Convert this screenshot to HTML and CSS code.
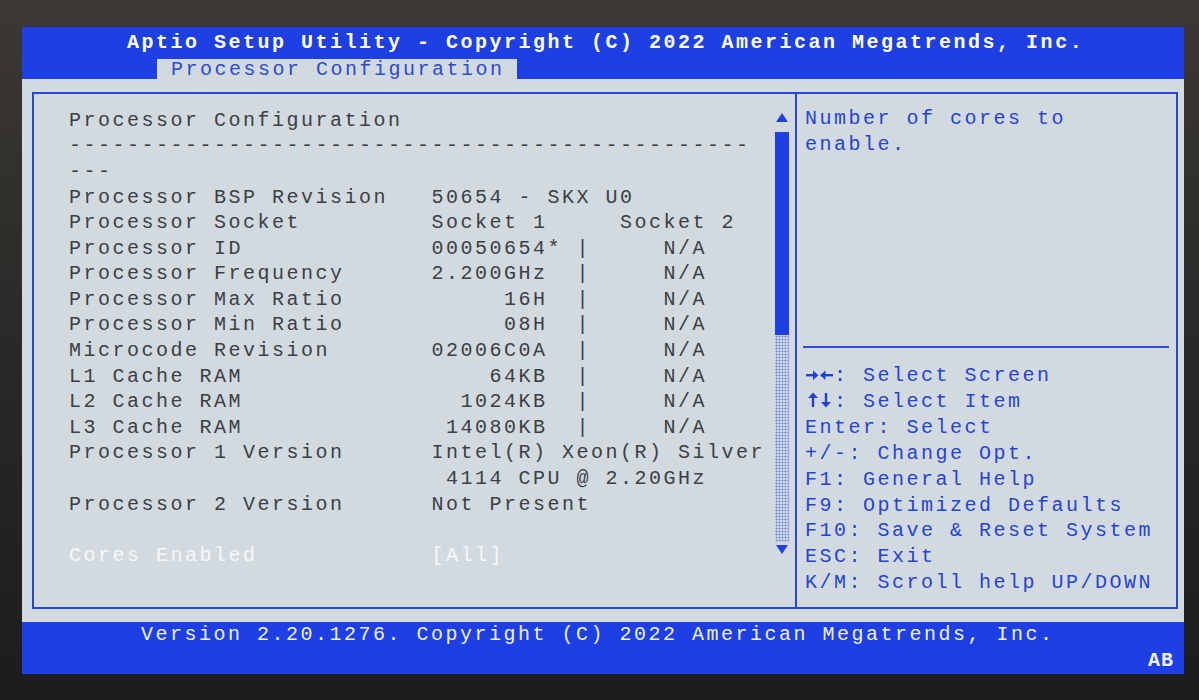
FILE: index.html
```html
<!DOCTYPE html>
<html lang="en">
<head>
    <meta charset="UTF-8">
    <title>Aptio Setup Utility</title>
    <link rel="stylesheet" href="styles.css">
</head>
<body>

    <div class="screen">

        <!-- Title bar with tab -->
        <header class="top-bar">
            <div class="title">Aptio Setup Utility - Copyright (C) 2022 American Megatrends, Inc.</div>
            <div class="tabs"><span class="tab">Processor Configuration</span></div>
        </header>

        <!-- Setup frame -->
        <main class="workspace">
            <div class="frame">
                <section class="setup-panel">
<pre class="setup-text">Processor Configuration
-----------------------------------------------
---
Processor BSP Revision   50654 - SKX U0
Processor Socket         Socket 1     Socket 2
Processor ID             00050654* |     N/A
Processor Frequency      2.200GHz  |     N/A
Processor Max Ratio           16H  |     N/A
Processor Min Ratio           08H  |     N/A
Microcode Revision       02006C0A  |     N/A
L1 Cache RAM                 64KB  |     N/A
L2 Cache RAM               1024KB  |     N/A
L3 Cache RAM              14080KB  |     N/A
Processor 1 Version      Intel(R) Xeon(R) Silver
                          4114 CPU @ 2.20GHz
Processor 2 Version      Not Present

<span class="selected">Cores Enabled            [All]</span></pre>
                    <div class="scrollbar">
                        <div class="scroll-arrow">
                            <svg width="12" height="9" viewBox="0 0 12 9"><polygon points="6,0 12,9 0,9"/></svg>
                        </div>
                        <div class="scroll-thumb"></div>
                        <div class="scroll-track"></div>
                        <div class="scroll-arrow down">
                            <svg width="12" height="9" viewBox="0 0 12 9"><polygon points="0,0 12,0 6,9"/></svg>
                        </div>
                    </div>
                </section>

                <aside class="help-panel">
<pre class="help-desc">Number of cores to
enable.</pre>
                    <div class="help-rule"></div>
                    <div class="help-keys">
                        <div class="key-line"><svg class="key-icon" width="29" height="14" viewBox="0 0 29 14"><rect x="1" y="6" width="8" height="2.4"/><polygon points="8,2.5 13.5,7.2 8,11.9"/><polygon points="15,7.2 20.5,2.5 20.5,11.9"/><rect x="20" y="6" width="8" height="2.4"/></svg>: Select Screen</div>
                        <div class="key-line"><svg class="key-icon" width="29" height="16" viewBox="0 0 29 16"><polygon points="3,6 8,0.5 13,6"/><rect x="6.8" y="5" width="2.4" height="10"/><rect x="19.8" y="1" width="2.4" height="10"/><polygon points="16,10 21,15.5 26,10"/></svg>: Select Item</div>
                        <div class="key-line">Enter: Select</div>
                        <div class="key-line">+/-: Change Opt.</div>
                        <div class="key-line">F1: General Help</div>
                        <div class="key-line">F9: Optimized Defaults</div>
                        <div class="key-line">F10: Save &amp; Reset System</div>
                        <div class="key-line">ESC: Exit</div>
                        <div class="key-line">K/M: Scroll help UP/DOWN</div>
                    </div>
                </aside>
            </div>
        </main>

        <!-- Footer -->
        <footer class="bottom-bar">
            <div class="version">Version 2.20.1276. Copyright (C) 2022 American Megatrends, Inc.</div>
            <div class="badge-row"><span class="badge">AB</span></div>
        </footer>

    </div>

</body>
</html>
```

FILE: styles.css
```css
body {
    margin: 0;
    padding: 0;
    min-height: 700px;
    overflow: hidden;
    background: linear-gradient(180deg, #3b3835 0%, #2a2927 50%, #1c1c1b 100%);
    font-family: "Liberation Mono", "DejaVu Sans Mono", monospace;
    font-size: 20px;
    letter-spacing: 2.5px;
}

pre {
    margin: 0;
    font-family: inherit;
    font-size: inherit;
    line-height: inherit;
}

.screen {
    width: 1162px;
    margin: 27px 0 0 22px;
    line-height: 25.88px;
}

/* Title bar */
.top-bar {
    background-color: #1d3fe3;
    height: 51.76px;
}

.title {
    height: 25.88px;
    padding-top: 3px;
    padding-left: 105px;
    box-sizing: border-box;
    color: #ffffff;
    font-weight: bold;
    white-space: pre;
}

.tabs {
    height: 25.88px;
    padding-top: 4px;
    box-sizing: border-box;
}

.tab {
    display: inline-block;
    margin-left: 135px;
    width: 360px;
    height: 21.88px;
    line-height: 21.88px;
    padding-left: 14px;
    box-sizing: border-box;
    background-color: #d2dae0;
    color: #2a4ad8;
}

/* Main area */
.workspace {
    background-color: #d2dae0;
    height: 543.5px;
    padding: 13px 6px 13px 10px;
    box-sizing: border-box;
}

.frame {
    display: flex;
    height: 100%;
    border: 2px solid #2646dc;
    box-sizing: border-box;
}

.setup-panel {
    width: 761px;
    display: flex;
    padding: 10.6px 6px 0 35px;
    box-sizing: border-box;
}

.setup-text {
    flex: 1;
    padding-top: 3.4px;
    line-height: 25.6px;
    color: #3b4046;
    white-space: pre;
}

.selected {
    color: #f6f8fa;
}

.scrollbar {
    width: 14px;
    display: flex;
    flex-direction: column;
}

.scroll-arrow {
    height: 25.88px;
    display: flex;
    align-items: center;
    justify-content: center;
}

.scroll-arrow.down {
    align-items: flex-start;
    padding-top: 3px;
    box-sizing: border-box;
}

.scroll-arrow svg {
    fill: #1f3fe0;
}

.scroll-thumb {
    height: 203px;
    margin-top: 2px;
    background-color: #1d3fe3;
}

.scroll-track {
    height: 207px;
    background-image: radial-gradient(circle, #6a86e4 0.9px, transparent 1.1px);
    background-size: 3px 3px;
}

/* Help panel */
.help-panel {
    flex: 1;
    border-left: 2px solid #2646dc;
    padding-top: 10.6px;
    color: #2444d8;
}

.help-desc {
    height: 232.92px;
    padding-top: 2px;
    padding-left: 8px;
    box-sizing: border-box;
    white-space: pre;
}

.help-rule {
    height: 25.88px;
    margin: 0 7px 0 6px;
    box-sizing: border-box;
    padding-top: 9px;
}

.help-rule::before {
    content: "";
    display: block;
    height: 2px;
    background-color: #2e4ed8;
}

.help-keys {
    padding-left: 8px;
}

.key-line {
    height: 25.88px;
    white-space: pre;
}

.key-icon {
    fill: #2040d8;
    vertical-align: -1px;
}

/* Footer */
.bottom-bar {
    background-color: #1d3fe3;
    height: 51.76px;
    color: #eef1f8;
}

.version {
    height: 25.88px;
    padding-left: 119px;
    white-space: pre;
}

.badge-row {
    height: 25.88px;
    text-align: right;
    padding-right: 10px;
}

.badge {
    font-weight: bold;
    letter-spacing: 1px;
}
```
